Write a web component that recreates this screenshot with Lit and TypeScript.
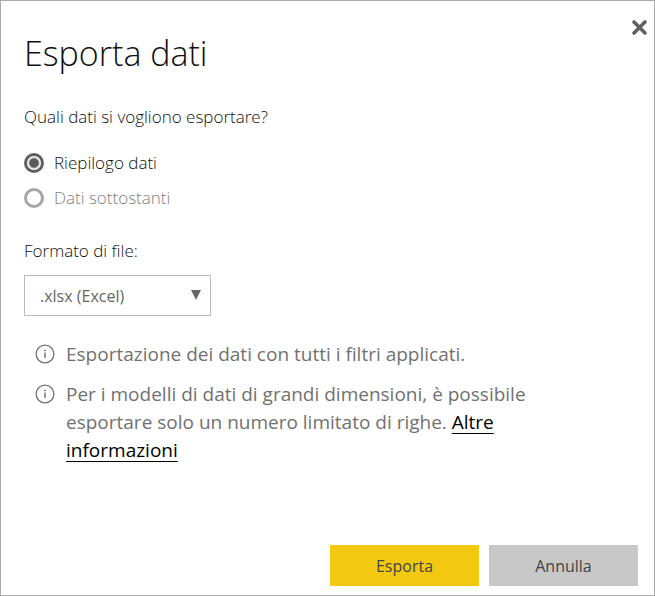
import { LitElement, html, css, svg } from "lit";
import { customElement, state } from "lit/decorators.js";

const infoIcon = html`<svg class="info" viewBox="0 0 20 20" aria-hidden="true">
  ${svg`<circle cx="10" cy="10" r="8.9" fill="none" stroke="currentColor" stroke-width="1.3"></circle>
  <path d="M10 8.4V14" stroke="currentColor" stroke-width="1.4"></path>
  <circle cx="10" cy="6.3" r="0.9" fill="currentColor"></circle>`}
</svg>`;

@customElement("app-root")
export class AppRoot extends LitElement {
  @state() private source = "summary";

  static styles = css`
    :host {
      display: block;
      font-family: "Open Sans", "Noto Sans", sans-serif;
      font-size: 17px;
      line-height: 24px;
      color: #111;
    }
    * {
      box-sizing: border-box;
    }
    .dialog {
      position: relative;
      display: flex;
      flex-direction: column;
      min-height: 100vh;
      padding: 28px 16px 9px 23px;
      border: 1px solid #aaa;
      background: #fff;
    }
    h1 {
      margin: 0 0 28px;
      font-size: 34px;
      line-height: 48px;
      font-weight: 300;
    }
    .close {
      position: absolute;
      top: 18px;
      right: 6px;
      width: 17px;
      height: 17px;
      padding: 0;
      border: 0;
      background: none;
      color: #606060;
    }
    .close svg {
      display: block;
      width: 17px;
      height: 17px;
    }
    fieldset {
      margin: 0 0 24px;
      padding: 0;
      border: 0;
      font-weight: 300;
    }
    legend {
      padding: 0;
      margin-bottom: 16px;
    }
    .choice {
      display: flex;
      align-items: center;
      gap: 10px;
      height: 35px;
    }
    .choice.off {
      color: #808080;
    }
    .choice input {
      appearance: none;
      flex: none;
      width: 20px;
      height: 20px;
      margin: 0;
      border: 3px solid #5f5f5f;
      border-radius: 50%;
      background: #fff;
    }
    .choice input:checked {
      background: radial-gradient(circle, #5a5a5a 4px, #fff 6px);
    }
    .choice input:disabled {
      border-color: #a6a6a6;
    }
    .format {
      margin-bottom: 12px;
      font-weight: 300;
    }
    .picker {
      position: relative;
      width: 187px;
      margin-bottom: 24px;
      color: #666;
    }
    select {
      appearance: none;
      display: block;
      width: 100%;
      height: 41px;
      padding: 0 32px 0 15px;
      border: 1px solid #bbb;
      border-radius: 0;
      background: #fff;
      font: inherit;
      font-size: 16px;
      color: inherit;
    }
    .arrow {
      position: absolute;
      top: 15px;
      right: 10px;
      width: 10px;
      height: 10px;
      pointer-events: none;
    }
    .notes {
      display: grid;
      gap: 12px;
      max-width: 540px;
      margin: 0 0 24px;
      padding: 0 0 0 11px;
      list-style: none;
      font-size: 19px;
      line-height: 28px;
      color: #717171;
    }
    .notes li {
      display: flex;
      gap: 11px;
    }
    .notes p {
      margin: 0;
    }
    .info {
      flex: none;
      width: 20px;
      height: 20px;
      margin-top: 4px;
    }
    a {
      color: #000;
      text-decoration: underline 1px;
      text-underline-offset: 4px;
      text-decoration-skip-ink: none;
    }
    .actions {
      display: flex;
      justify-content: flex-end;
      gap: 10px;
      margin-top: auto;
    }
    .actions button {
      width: 149px;
      height: 41px;
      padding: 0;
      border: 0;
      background: #c8c8c8;
      font: inherit;
      font-size: 16px;
      color: #444;
    }
    .actions .primary {
      background: #f2c811;
    }
  `;

  render() {
    return html`
      <section class="dialog" role="dialog" aria-labelledby="title">
        <button class="close" aria-label="Chiudi">
          <svg viewBox="0 0 17 17"><path d="M3 3L14 14M14 3L3 14" stroke="currentColor" stroke-width="3.6" stroke-linecap="round"></path></svg>
        </button>
        <h1 id="title">Esporta dati</h1>
        <fieldset>
          <legend>Quali dati si vogliono esportare?</legend>
          <label class="choice">
            <input type="radio" name="source" value="summary" .checked=${this.source === "summary"}
              @change=${() => (this.source = "summary")} />
            Riepilogo dati
          </label>
          <label class="choice off">
            <input type="radio" name="source" value="underlying" disabled />
            Dati sottostanti
          </label>
        </fieldset>
        <label class="format" for="format">Formato di file:</label>
        <div class="picker">
          <select id="format">
            <option>.xlsx (Excel)</option>
          </select>
          <svg class="arrow" viewBox="0 0 10 10" aria-hidden="true"><path d="M0 0H10L5 10Z" fill="currentColor"></path></svg>
        </div>
        <ul class="notes">
          <li>${infoIcon}<p>Esportazione dei dati con tutti i filtri applicati.</p></li>
          <li>
            ${infoIcon}
            <p>Per i modelli di dati di grandi dimensioni, è possibile esportare solo un numero limitato di righe. <a href="#">Altre informazioni</a></p>
          </li>
        </ul>
        <div class="actions">
          <button class="primary">Esporta</button>
          <button>Annulla</button>
        </div>
      </section>
    `;
  }
}
